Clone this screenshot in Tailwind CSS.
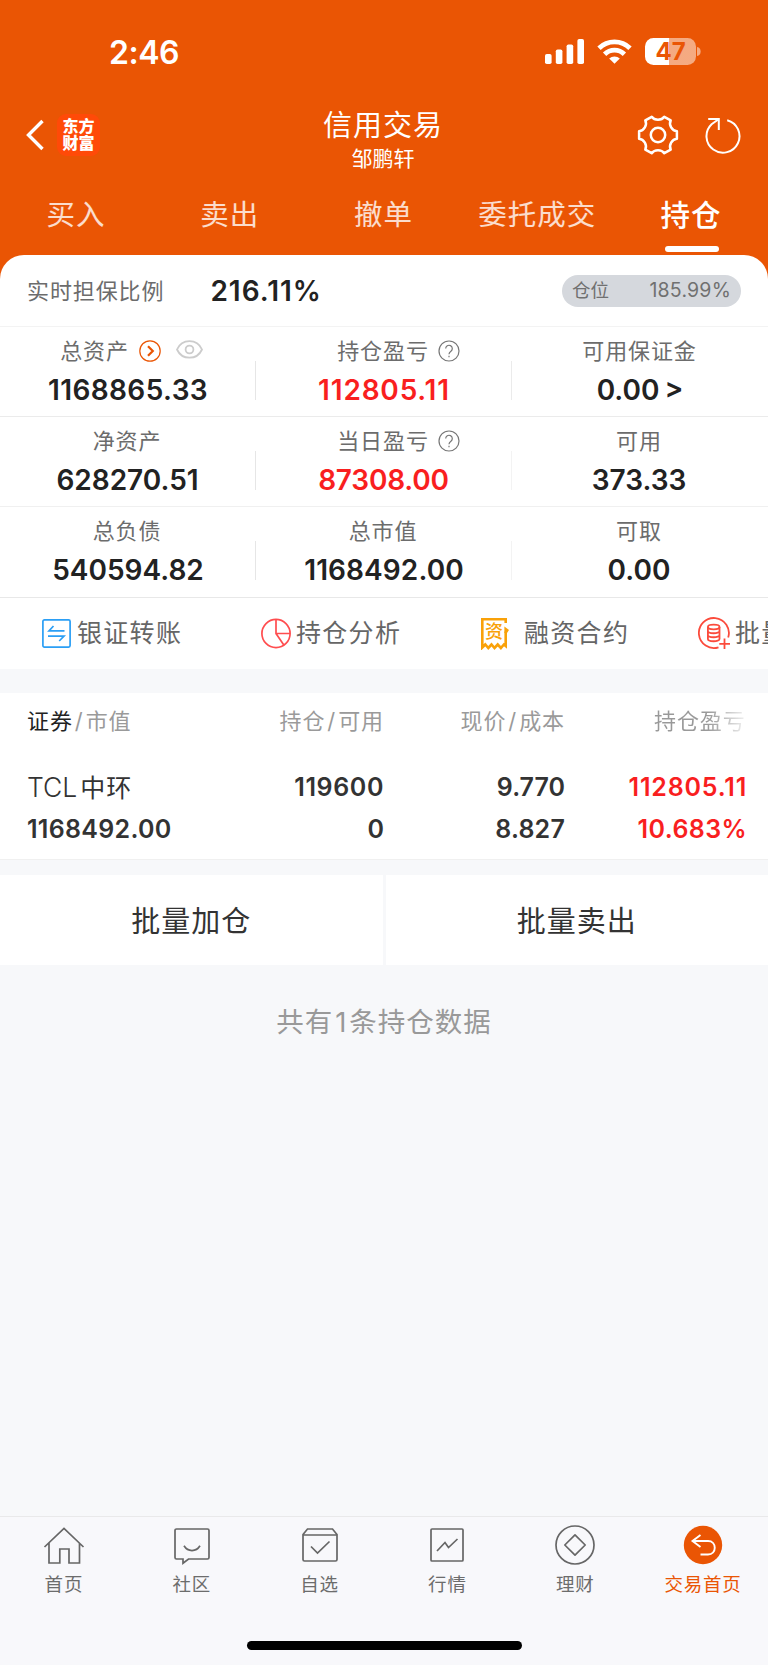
<!DOCTYPE html>
<html lang="zh-CN">
<head>
    <meta charset="UTF-8">
    <meta name="viewport" content="width=device-width, initial-scale=1.0">
    <title>信用交易</title>
    <script src="https://cdn.jsdelivr.net/npm/@tailwindcss/browser@4"></script>
</head>
<body class="bg-[#f7f8fa] font-['Inter','Noto_Sans_CJK_SC',sans-serif] text-[#222]">
<div class="w-[768px] h-[1665px] flex flex-col overflow-hidden whitespace-nowrap">

    <!-- 顶部 -->
    <header class="bg-[#ea5504] text-white h-[279px] shrink-0">
        <!-- 状态栏 -->
        <div class="h-[103px] flex items-center justify-between pl-[109px] pr-[67px]">
            <span class="text-[32px] font-semibold leading-none tracking-[-0.5px] pt-[3px]">2:46</span>
            <div class="flex items-center">
                <svg class="w-[39px] h-[25px]" viewBox="0 0 39 25" fill="#fff">
                    <rect x="0" y="15" width="6.6" height="10" rx="1.8"/>
                    <rect x="10.8" y="10.5" width="6.6" height="14.5" rx="1.8"/>
                    <rect x="21.6" y="5.5" width="6.6" height="19.5" rx="1.8"/>
                    <rect x="32.4" y="0" width="6.6" height="25" rx="1.8"/>
                </svg>
                <svg class="w-[35px] h-[25px] ml-[13px]" viewBox="0 0 35 25" fill="none" stroke="#fff" stroke-width="4.8">
                    <path d="M2 9.2a22.3 22.3 0 0 1 31 0"/>
                    <path d="M7.6 15.2a14.2 14.2 0 0 1 19.8 0"/>
                    <path d="M17.5 24.8l-5.3-5.2a7.6 7.6 0 0 1 10.6 0z" fill="#fff" stroke="none"/>
                </svg>
                <div class="ml-[13px] w-[51px] h-[27px] rounded-[8.5px] overflow-hidden bg-linear-to-r from-white from-47% to-white/50 to-47% flex items-center justify-center text-[#ea5504] text-[24px] font-bold leading-none">47</div>
                <svg class="w-[4px] h-[9px] ml-[1px]" viewBox="0 0 4 9"><path d="M0 0a4.6 4.6 0 0 1 0 9z" fill="#fff" fill-opacity=".5"/></svg>
            </div>
        </div>

        <!-- 标题栏 -->
        <div class="h-[76px] grid grid-cols-3 pt-[5px]">
            <div class="flex items-center gap-[12px] pl-[25px] pb-[17px]">
                <svg class="w-[20px] h-[34px]" viewBox="0 0 20 34" fill="none" stroke="#fff" stroke-width="3.4"><path d="M17.5 3L3.5 17l14 14"/></svg>
                <div class="w-[43px] h-[42px] shrink-0 rounded-[9px] bg-[#ff4a08] flex flex-col items-center justify-center text-[16px] leading-[17px] font-black">
                    <span>东方</span>
                    <span>财富</span>
                </div>
            </div>
            <div class="flex flex-col items-center pr-[2px]">
                <h1 class="text-[29px] leading-[36px] tracking-[1px]">信用交易</h1>
                <p class="text-[21px] leading-[30px]">邹鹏轩</p>
            </div>
            <div class="flex items-center justify-end gap-[26px] pr-[27px] pb-[17px]">
                <svg class="w-[42px] h-[42px]" viewBox="-1 -1 42 42" fill="none" stroke="#fff" stroke-width="2.5" stroke-linejoin="round">
                    <path d="M38.900 16.300V23.700C34 24.100 30.500 30.100 32.700 34.600L26.300 38.200C23.500 34.200 16.500 34.200 13.700 38.200L7.300 34.600C9.500 30.100 6 24.100 1.100 23.700V16.300C6 15.900 9.500 9.900 7.300 5.400L13.700 1.800C16.500 5.800 23.500 5.800 26.300 1.800L32.700 5.400C30.500 9.900 34 15.900 38.900 16.300z"/>
                    <circle cx="20" cy="20" r="7.2"/>
                </svg>
                <svg class="w-[36px] h-[38px]" viewBox="0 0 36 38" fill="none" stroke="#fff" stroke-width="2">
                    <path d="M22.2 4.2A16.500 16.500 0 1 1 6.600 8.200L13.600 3.200"/>
                    <path d="M3.200 3h10.600v11"/>
                </svg>
            </div>
        </div>

        <!-- 交易标签 -->
        <nav class="grid grid-cols-5 text-center text-[28.5px] leading-[40px] tracking-[1px] text-white/80 pt-[16px] -ml-px">
            <a>买入</a>
            <a>卖出</a>
            <a>撤单</a>
            <a>委托成交</a>
            <a class="text-white text-[29.5px] font-medium flex flex-col items-center">持仓<span class="block w-[54px] h-[5.5px] rounded-full bg-white mt-[11px] ml-px"></span></a>
        </nav>
    </header>

    <!-- 资产 -->
    <section class="bg-white rounded-t-[24px] -mt-[24px] h-[414px] shrink-0">
        <div class="h-[72px] flex items-center px-[27px] border-b border-[#f3f3f3]">
            <span class="text-[22px] tracking-[0.9px] text-[#6c6c6c] pt-px">实时担保比例</span>
            <span class="text-[28px] font-semibold tracking-[1px] ml-[46px] pt-px">216.11%</span>
            <div class="ml-auto w-[179px] h-[32px] rounded-full bg-[#d5d8dd] flex items-center justify-between px-[10px] text-[#707070] text-[19.5px]">
                <span class="text-[18.5px]">仓位</span>
                <span class="tracking-[0.2px]">185.99%</span>
            </div>
        </div>

        <div class="grid grid-cols-3 text-center">
            <div class="h-[90px] border-b border-[#ebebeb] flex flex-col items-center relative">
                <div class="flex items-center h-[32px] mt-[8px] pl-[7px] text-[22px] tracking-[0.9px] text-[#6c6c6c]">
                    总资产
                    <svg class="w-[22px] h-[22px] ml-[10px]" viewBox="0 0 22 22" fill="none" stroke="#ea5504"><circle cx="11" cy="11" r="10.2" stroke-width="1.2"/><path d="M9 6.2l4.8 4.8L9 15.8" stroke-width="2.2"/></svg>
                    <svg class="w-[27px] h-[19px] ml-[15px] mb-[3px]" viewBox="0 0 27 19" fill="none" stroke="#ccc" stroke-width="1.8"><path d="M1 9.5C6-1.600 21-1.600 26 9.500 21 20.400 6 20.400 1 9.500z"/><circle cx="13.500" cy="9.500" r="3.900"/></svg>
                </div>
                <span class="text-[28px] leading-[34px] mt-[6px] font-semibold tracking-[0.4px]">1168865.33</span>
                <i class="absolute right-0 bottom-[16px] w-px h-[39px] bg-[#e6e6e6]"></i>
            </div>
            <div class="h-[90px] border-b border-[#ebebeb] flex flex-col items-center relative">
                <div class="flex items-center h-[32px] mt-[8px] pl-[29px] text-[22px] tracking-[0.9px] text-[#6c6c6c]">
                    持仓盈亏
                    <svg class="w-[22px] h-[22px] ml-[9px]" viewBox="0 0 22 22" fill="none" stroke="#777" stroke-width="1.200"><circle cx="11" cy="11" r="10"/><path d="M7.700 8.600a3.300 3.300 0 1 1 5.300 2.600c-1.300 1-2 1.500-2 3.100M11 15.700v1.500"/></svg>
                </div>
                <span class="text-[28px] leading-[34px] mt-[6px] font-semibold tracking-[0.8px] text-[#f91f1f]">112805.11</span>
                <i class="absolute right-0 bottom-[16px] w-px h-[39px] bg-[#ebebeb]"></i>
            </div>
            <div class="h-[90px] border-b border-[#ebebeb] flex flex-col items-center">
                <div class="flex items-center h-[32px] mt-[8px] pr-px text-[22px] tracking-[0.9px] text-[#6c6c6c]">可用保证金</div>
                <span class="text-[28px] leading-[34px] mt-[6px] font-semibold [word-spacing:-2px]">0.00 &gt;</span>
            </div>

            <div class="h-[90px] border-b border-[#f0f0f0] flex flex-col items-center relative">
                <div class="flex items-center h-[32px] mt-[8px] pr-[2px] text-[22px] tracking-[0.9px] text-[#6c6c6c]">净资产</div>
                <span class="text-[28px] leading-[34px] mt-[6px] pr-px font-semibold">628270.51</span>
                <i class="absolute right-0 bottom-[16px] w-px h-[39px] bg-[#e6e6e6]"></i>
            </div>
            <div class="h-[90px] border-b border-[#f0f0f0] flex flex-col items-center relative">
                <div class="flex items-center h-[32px] mt-[8px] pl-[29px] text-[22px] tracking-[0.9px] text-[#6c6c6c]">
                    当日盈亏
                    <svg class="w-[22px] h-[22px] ml-[9px]" viewBox="0 0 22 22" fill="none" stroke="#777" stroke-width="1.200"><circle cx="11" cy="11" r="10"/><path d="M7.700 8.600a3.300 3.300 0 1 1 5.300 2.600c-1.300 1-2 1.500-2 3.100M11 15.700v1.500"/></svg>
                </div>
                <span class="text-[28px] leading-[34px] mt-[6px] pr-px font-semibold tracking-[-0.2px] text-[#f91f1f]">87308.00</span>
                <i class="absolute right-0 bottom-[16px] w-px h-[39px] bg-[#f3f3f3]"></i>
            </div>
            <div class="h-[90px] border-b border-[#f0f0f0] flex flex-col items-center">
                <div class="flex items-center h-[32px] mt-[8px] pr-[2px] text-[22px] tracking-[0.9px] text-[#6c6c6c]">可用</div>
                <span class="text-[28px] leading-[34px] mt-[6px] pr-[2px] font-semibold">373.33</span>
            </div>

            <div class="h-[91px] border-b border-[#e8e8e8] flex flex-col items-center relative">
                <div class="flex items-center h-[32px] mt-[8px] pr-[2px] text-[22px] tracking-[0.9px] text-[#6c6c6c]">总负债</div>
                <span class="text-[28px] leading-[34px] mt-[6px] font-semibold">540594.82</span>
                <i class="absolute right-0 bottom-[17px] w-px h-[39px] bg-[#e6e6e6]"></i>
            </div>
            <div class="h-[91px] border-b border-[#e8e8e8] flex flex-col items-center relative">
                <div class="flex items-center h-[32px] mt-[8px] pr-[2px] text-[22px] tracking-[0.9px] text-[#6c6c6c]">总市值</div>
                <span class="text-[28px] leading-[34px] mt-[6px] font-semibold tracking-[0.1px]">1168492.00</span>
                <i class="absolute right-0 bottom-[17px] w-px h-[39px] bg-[#f3f3f3]"></i>
            </div>
            <div class="h-[91px] border-b border-[#e8e8e8] flex flex-col items-center">
                <div class="flex items-center h-[32px] mt-[8px] pr-[2px] text-[22px] tracking-[0.9px] text-[#6c6c6c]">可取</div>
                <span class="text-[28px] leading-[34px] mt-[6px] pr-[2px] font-semibold">0.00</span>
            </div>
        </div>

        <!-- 快捷入口 -->
        <div class="h-[71px] flex items-center pl-[42px] overflow-hidden text-[25px] tracking-[1.3px] text-[#666]">
            <div class="w-[219px] shrink-0 flex items-center gap-[6px]">
                <svg class="w-[29px] h-[29px]" viewBox="0 0 29 29" fill="none" stroke="#2b9ff5" stroke-width="1.700"><rect x=".9" y=".9" width="27.200" height="27.200" rx="1.500"/><path d="M11.500 7L7 11.800h15.500M6 17.200h16L17.200 22"/></svg>
                <span>银证转账</span>
            </div>
            <div class="w-[220px] shrink-0 flex items-center gap-[5px]">
                <svg class="w-[30px] h-[31px]" viewBox="0 0 30 31" fill="none" stroke="#ff4d4f" stroke-width="1.700"><circle cx="15" cy="15.500" r="14.100"/><path d="M15 1.500v14h14M15 15.500l7.800 11.500"/></svg>
                <span>持仓分析</span>
            </div>
            <div class="w-[217px] shrink-0 flex items-center gap-[15px]">
                <div class="w-[28px] h-[32px] relative">
                    <svg class="w-[28px] h-[32px]" viewBox="0 0 28 32" fill="none" stroke="#f9a109" stroke-width="2.600"><path d="M24.700 5V1.300H1.300V29.500l3-3 3 3.500 3.200-3.500 3 3.500 3.200-3.500 3.200 3.500 3-3.500 1.800 1.500V13.500"/><path d="M23.400 8.500l4.600 3.500-2 3h-2.600z" fill="#f9a109" stroke="none"/></svg>
                    <span class="absolute left-[4px] top-[4px] text-[18px] leading-[20px] tracking-normal font-medium text-[#f9a109]">资</span>
                </div>
                <span>融资合约</span>
            </div>
            <div class="shrink-0 flex items-center gap-[5px]">
                <svg class="w-[32px] h-[33px]" viewBox="0 0 32 33" fill="none" stroke="#fb4b3c" stroke-width="1.800"><path d="M20.500 30.300A15 15 0 1 1 30.200 20.500"/><ellipse cx="15.700" cy="10" rx="5.800" ry="2.300"/><path d="M9.900 10v12c0 3 11.600 3 11.600 0V10M9.900 14c0 3 11.600 3 11.600 0M9.900 18c0 3 11.600 3 11.600 0M26.500 21.500V32M21.300 26.800H32"/></svg>
                <span>批量</span>
            </div>
        </div>
    </section>

    <!-- 持仓列表 -->
    <section class="bg-white mt-[24px] h-[167px] shrink-0 border-b border-[#f0f0f0]">
        <div class="grid grid-cols-[200px_184px_181px_203px] h-[57px] items-center text-[22px] tracking-[0.9px] text-[#9a9a9a]">
            <div class="pl-[27px]"><span class="text-[#222]">证券</span><span class="mx-[2px]">/</span>市值</div>
            <div class="text-right">持仓<span class="mx-[2px]">/</span>可用</div>
            <div class="text-right">现价<span class="mx-[2px]">/</span>成本</div>
            <div class="pl-[89px] bg-linear-to-r from-[#999] from-70% to-white to-92% bg-clip-text text-transparent">持仓盈亏</div>
        </div>
        <div class="grid grid-cols-[200px_184px_181px_182px] gap-y-[3px] leading-[38px] mt-[18px] text-[25px] font-semibold text-[#333]">
            <div class="pl-[27px] font-normal"><span class="font-light text-[26.500px]">TCL</span><span class="ml-[3px] tracking-[1px]">中环</span></div>
            <div class="text-right tracking-[0.6px]">119600</div>
            <div class="text-right">9.770</div>
            <div class="text-right tracking-[0.8px] text-[#f91f1f]">112805.11</div>
            <div class="pl-[27px] tracking-[0.3px]">1168492.00</div>
            <div class="text-right">0</div>
            <div class="text-right tracking-[0.2px]">8.827</div>
            <div class="text-right tracking-[0.4px] text-[#f91f1f]">10.683%</div>
        </div>
    </section>

    <!-- 批量操作 -->
    <section class="mt-[15px] grid grid-cols-2 gap-[3px] h-[90px] shrink-0 text-[29px] tracking-[1px] text-[#333]">
        <button class="bg-white pt-[3px]">批量加仓</button>
        <button class="bg-white pt-[3px]">批量卖出</button>
    </section>

    <p class="mt-[36px] text-center text-[27.5px] leading-[42px] tracking-[1px] text-[#999]">共有<span class="mx-[2px]">1</span>条持仓数据</p>

    <!-- 底部导航 -->
    <footer class="mt-auto h-[149px] shrink-0 bg-[#f8f8fb] border-t border-[#e9e9ea]">
        <nav class="grid grid-cols-6 h-[90px] pt-[8px] pr-px text-[18.5px] leading-[28px] tracking-[0.8px] text-[#6c6c6c]">
            <a class="flex flex-col items-center gap-[3px]">
                <svg class="w-[42px] h-[42px]" viewBox="0 0 42 42" fill="none" stroke="#666" stroke-width="1.700"><path d="M1.500 22L21 3.500 40.500 22M6 18v20h10.800V24h9.200v14h10.500V18"/></svg>
                <span>首页</span>
            </a>
            <a class="flex flex-col items-center gap-[3px]">
                <svg class="w-[42px] h-[42px]" viewBox="0 0 42 42" fill="none" stroke="#666" stroke-width="1.700"><path d="M5.500 4h31a1.500 1.500 0 0 1 1.500 1.500v27a1.500 1.500 0 0 1-1.500 1.500H17.500l-5.500 4.200V34H5.500A1.500 1.500 0 0 1 4 32.500v-27A1.500 1.500 0 0 1 5.500 4z"/><path d="M13 20.800c4 6.400 12 6.400 16 0"/></svg>
                <span>社区</span>
            </a>
            <a class="flex flex-col items-center gap-[3px]">
                <svg class="w-[42px] h-[42px]" viewBox="0 0 42 42" fill="none" stroke="#666" stroke-width="1.700"><path d="M4 9.500L8.500 4h25L38 9.500V34.500a1.500 1.500 0 0 1-1.500 1.500h-31A1.500 1.500 0 0 1 4 34.500zM4 10h34"/><path d="M12 21.500l6.500 6.500 12-11.500"/></svg>
                <span>自选</span>
            </a>
            <a class="flex flex-col items-center gap-[3px]">
                <svg class="w-[42px] h-[42px]" viewBox="0 0 42 42" fill="none" stroke="#666" stroke-width="1.700"><rect x="5" y="4" width="32" height="32" rx="1"/><path d="M11 26l8-8.500 3.500 5L31.500 14"/></svg>
                <span>行情</span>
            </a>
            <a class="flex flex-col items-center gap-[3px]">
                <svg class="w-[42px] h-[42px]" viewBox="0 0 42 42" fill="none" stroke="#666" stroke-width="1.700"><circle cx="21" cy="20" r="19"/><path d="M21 9.800L31.200 20 21 30.200 10.800 20z" stroke-linejoin="round"/></svg>
                <span>理财</span>
            </a>
            <a class="flex flex-col items-center gap-[3px] text-[#ea5504]">
                <svg class="w-[42px] h-[42px]" viewBox="0 0 42 42" fill="none" stroke="#fff" stroke-width="1.900"><circle cx="21" cy="20" r="19.200" fill="#ea5504" stroke="none"/><path d="M18.500 10l-8 6 8 6M10.500 16H26c9 0 9 13.500 0 13.500h-7.500"/></svg>
                <span>交易首页</span>
            </a>
        </nav>
        <div class="w-[275px] h-[9px] rounded-full bg-black mx-auto mt-[34px]"></div>
    </footer>
</div>
</body>
</html>
